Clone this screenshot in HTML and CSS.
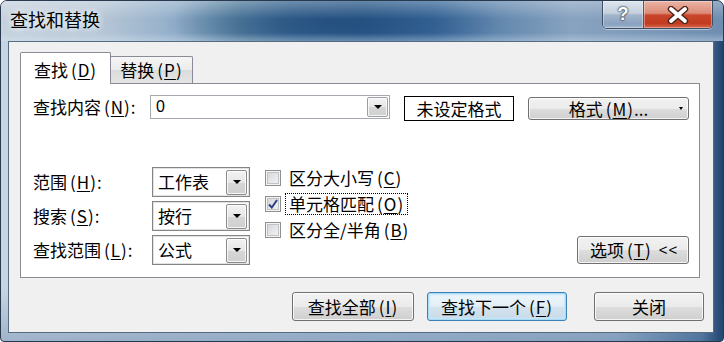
FILE: index.html
```html
<!DOCTYPE html>
<html lang="zh-CN">
<head>
<meta charset="utf-8">
<title>查找和替换</title>
<link rel="stylesheet" href="styles.css">
</head>
<body>
<div class="window">
  <div class="titlebar">
    <span class="title">查找和替换</span>
    <div class="caption">
      <div class="cap-btn help">?</div>
      <div class="cap-btn close">
        <svg width="24" height="18" viewBox="0 0 24 18"><path d="M5 3 L19 15 M19 3 L5 15" stroke="#4a2418" stroke-width="6.5" stroke-linecap="round"/><path d="M5 3 L19 15 M19 3 L5 15" stroke="#fff" stroke-width="3.8" stroke-linecap="round"/></svg>
      </div>
    </div>
  </div>
  <div class="client">
    <div class="tabs">
      <div class="tab active">查找<span class="mn">(<u>D</u>)</span></div>
      <div class="tab">替换<span class="mn">(<u>P</u>)</span></div>
    </div>
    <div class="panel">
      <div class="find-row">
        <span class="label">查找内容<span class="mn">(<u>N</u>)</span>:</span>
        <div class="combo"><span class="value">0</span><span class="drop"></span></div>
        <div class="fmt-box">未设定格式</div>
        <div class="btn fmt-btn"><span></span><span>格式<span class="mn">(<u>M</u>)</span>...</span><span class="mini-arrow"></span></div>
      </div>
      <div class="options">
        <div class="selects">
          <span class="label">范围<span class="mn">(<u>H</u>)</span>:</span>
          <div class="select"><span>工作表</span><span class="drop"></span></div>
          <span class="label">搜索<span class="mn">(<u>S</u>)</span>:</span>
          <div class="select"><span>按行</span><span class="drop"></span></div>
          <span class="label">查找范围<span class="mn">(<u>L</u>)</span>:</span>
          <div class="select"><span>公式</span><span class="drop"></span></div>
        </div>
        <div class="checks">
          <div class="check"><span class="box"></span><span class="ctext">区分大小写<span class="mn">(<u>C</u>)</span></span></div>
          <div class="check"><span class="box"><svg width="12" height="12" viewBox="0 0 12 12"><path d="M2 6.5 L4.8 9.5 L10 2" fill="none" stroke="#2c3f85" stroke-width="2"/></svg></span><span class="ctext focus">单元格匹配<span class="mn">(<u>O</u>)</span></span></div>
          <div class="check"><span class="box"></span><span class="ctext">区分全/半角<span class="mn">(<u>B</u>)</span></span></div>
        </div>
        <div class="btn opt-btn">选项<span class="mn">(<u>T</u>)</span><span class="chev">&lt;&lt;</span></div>
      </div>
    </div>
    <div class="actions">
      <div class="btn act find-all">查找全部<span class="mn">(<u>I</u>)</span></div>
      <div class="btn act find-next default">查找下一个<span class="mn">(<u>F</u>)</span></div>
      <div class="btn act close-btn">关闭</div>
    </div>
  </div>
</div>
</body>
</html>
```

FILE: styles.css
```css
html, body {
  margin: 0;
  padding: 0;
}
body {
  width: 724px;
  height: 342px;
  overflow: hidden;
  background: #ffffff;
  font-family: "Noto Sans CJK SC", "Liberation Sans", sans-serif;
  font-size: 17px;
  color: #000;
}
u {
  text-decoration: underline;
  text-underline-offset: 2px;
  text-decoration-thickness: 1px;
}
.mn {
  margin-left: 3px;
  letter-spacing: 1px;
}
.window {
  box-sizing: border-box;
  width: 724px;
  height: 342px;
  border: 1px solid #2a3a4e;
  border-radius: 7px 7px 4px 4px;
  overflow: hidden;
  display: flex;
  flex-direction: column;
  background:
    linear-gradient(to bottom, rgba(255,255,255,0) 85%, rgba(40,80,130,.25) 100%),
    linear-gradient(to right, #c7d5e3 0%, #b8cadc 35%, #aec3d8 60%, #a3bad1 85%, #5e81a7 97%, #20426c 100%);
}
.titlebar {
  height: 40px;
  flex: none;
  display: flex;
  align-items: flex-start;
  padding: 0 10px 0 9px;
  background:
    linear-gradient(to bottom, rgba(255,255,255,.28) 0%, rgba(255,255,255,0) 45%, rgba(255,255,255,0) 80%, rgba(220,235,248,.35) 100%),
    radial-gradient(ellipse 170px 34px at 330px 22px, rgba(25,65,115,.55), rgba(25,65,115,0)),
    linear-gradient(to right, #c6d2de 0%, #b9c8d7 13%, #93afca 24%, #55809f 33%, #3a6894 40%, #2d5d8c 50%, #39689a 60%, #6388ae 69%, #88a3c0 79%, #7d99b9 90%, #6e8db1 100%);
}
.title {
  line-height: 36px;
  font-size: 18px;
  text-shadow: 0 0 6px rgba(255,255,255,.9), 0 0 10px rgba(255,255,255,.6);
}
.caption {
  margin-left: auto;
  display: flex;
  height: 27px;
  border: 1px solid #3d4f66;
  border-top: none;
  border-radius: 0 0 5px 5px;
  overflow: hidden;
  box-shadow: 0 1px 0 rgba(255,255,255,.45);
}
.cap-btn {
  height: 27px;
  display: flex;
  align-items: center;
  justify-content: center;
  box-shadow: inset 0 0 0 1px rgba(255,255,255,.35);
}
.help {
  width: 40px;
  border-right: 1px solid #4a5a70;
  color: #fff;
  font-family: "Liberation Sans", sans-serif;
  font-weight: bold;
  font-size: 18px;
  text-shadow: 0 0 2px #1e2a3c, 0 0 2px #1e2a3c;
  background: linear-gradient(to bottom, #dde5ed 0%, #c4d0dd 45%, #a3b5ca 52%, #8aa2bf 85%, #9fb5cf 100%);
}
.close {
  width: 68px;
  background: linear-gradient(to bottom, #eab4a6 0%, #dd8b77 45%, #c9472c 52%, #c13a1f 82%, #d8674b 100%);
}
.client {
  flex: 1;
  margin: 0 9px 8px 7px;
  border: 1px solid #566a80;
  background: #f0f0f0;
  display: flex;
  flex-direction: column;
  padding: 10px 9px 0 11px;
}
.tabs {
  display: flex;
  align-items: flex-end;
  height: 31px;
}
.tab {
  box-sizing: border-box;
  height: 27px;
  width: 83px;
  margin-left: -1px;
  border: 1px solid #898c95;
  border-bottom: none;
  border-radius: 2px 2px 0 0;
  background: linear-gradient(to bottom, #f6f6f6 0%, #ebebeb 50%, #dcdcdc 51%, #e4e4e4 100%);
  display: flex;
  align-items: center;
  justify-content: center;
  line-height: 20px;
}
.tab.active {
  position: relative;
  z-index: 1;
  margin-left: 0;
  width: 91px;
  height: 32px;
  margin-bottom: -1px;
  background: #ffffff;
  padding-top: 2px;
}
.panel {
  box-sizing: border-box;
  height: 195px;
  margin-right: 4px;
  background: #ffffff;
  border: 1px solid #898c95;
}
.label {
  line-height: 22px;
  white-space: nowrap;
}
.find-row {
  display: flex;
  align-items: flex-start;
  margin-top: 11px;
  padding-left: 12px;
}
.find-row .label {
  width: 117px;
  flex: none;
  margin-top: 1px;
}
.combo {
  box-sizing: border-box;
  width: 240px;
  height: 24px;
  border: 1px solid #a5a9b0;
  display: flex;
  align-items: center;
  background: #fff;
}
.combo .value {
  padding-left: 5px;
  line-height: 20px;
  font-family: "Liberation Sans", sans-serif;
  font-size: 16px;
}
.drop {
  box-sizing: border-box;
  margin-left: auto;
  display: flex;
  align-items: center;
  justify-content: center;
  border: 1px solid #9aa0a6;
  border-radius: 2px;
  background: linear-gradient(to bottom, #f3f3f3 0%, #e6e6e6 50%, #d6d6d6 51%, #d0d0d0 100%);
  box-shadow: inset 0 0 0 1px rgba(255,255,255,.8);
}
.drop::after {
  content: "";
  width: 0;
  height: 0;
  border-left: 4px solid transparent;
  border-right: 4px solid transparent;
  border-top: 4px solid #000;
}
.combo .drop {
  width: 21px;
  height: 20px;
  margin-right: 1px;
}
.fmt-box {
  box-sizing: border-box;
  margin-left: 14px;
  margin-top: 1px;
  width: 110px;
  height: 25px;
  border: 1px solid #000;
  background: #fff;
  display: flex;
  align-items: center;
  justify-content: center;
  line-height: 20px;
}
.btn {
  box-sizing: border-box;
  border: 1px solid #707070;
  border-radius: 3px;
  background: linear-gradient(to bottom, #f2f2f2 0%, #ebebeb 50%, #dddddd 51%, #cfcfcf 100%);
  box-shadow: inset 0 0 0 1px rgba(255,255,255,.75);
  display: flex;
  align-items: center;
  justify-content: center;
  line-height: 20px;
  white-space: nowrap;
}
.fmt-btn {
  margin-left: 14px;
  margin-top: 2px;
  width: 161px;
  height: 23px;
  display: grid;
  grid-template-columns: 1fr auto 1fr;
  align-items: center;
}
.mini-arrow {
  justify-self: end;
  margin-right: 5px;
  width: 0;
  height: 0;
  border-left: 2.5px solid transparent;
  border-right: 2.5px solid transparent;
  border-top: 3px solid #000;
}
.options {
  display: flex;
  margin-top: 46px;
  padding-left: 12px;
  padding-right: 10px;
}
.selects {
  display: grid;
  grid-template-columns: 119px 98px;
  grid-auto-rows: 30px;
  row-gap: 4px;
  align-items: center;
}
.select {
  box-sizing: border-box;
  height: 30px;
  border: 1px solid #858585;
  box-shadow: inset 0 0 0 1px #e2e2e2;
  background: #fff;
  display: flex;
  align-items: center;
  padding-left: 5px;
  line-height: 22px;
}
.select .drop {
  width: 21px;
  height: 25px;
  margin-right: 2px;
  border-color: #8a8a8a;
}
.checks {
  margin-left: 15px;
  margin-top: -2px;
  display: flex;
  flex-direction: column;
}
.check {
  display: flex;
  align-items: center;
  height: 26px;
}
.box {
  box-sizing: border-box;
  width: 16px;
  height: 16px;
  border: 1px solid #8e8f8f;
  background: linear-gradient(135deg, #cfd2d6 0%, #e4e5e7 50%, #f7f7f7 100%);
  box-shadow: inset 0 0 0 1px #f4f4f4, inset 0 0 0 2px #bfc3c8;
  display: grid;
  place-items: center;
}
.ctext {
  margin-left: 4px;
  border: 1px dotted transparent;
  padding: 0 3px;
  line-height: 20px;
}
.ctext.focus {
  border-color: #000;
}
.opt-btn {
  margin-left: auto;
  align-self: flex-end;
  margin-bottom: 1px;
  width: 112px;
  height: 28px;
  justify-content: flex-start;
  padding-left: 12px;
}
.chev {
  margin-left: 7px;
  letter-spacing: 1px;
  font-family: "Liberation Sans", sans-serif;
  font-size: 15px;
}
.actions {
  display: flex;
  justify-content: flex-end;
  margin-top: 14px;
}
.act {
  height: 29px;
}
.find-all {
  width: 122px;
}
.find-next {
  width: 140px;
  margin-left: 13px;
}
.close-btn {
  width: 110px;
  margin-left: 27px;
}
.default {
  border-color: #3c7fb1;
  background: linear-gradient(to bottom, #eef6fb 0%, #e2eef6 50%, #d3e3ee 51%, #c9dbe8 100%);
  box-shadow: inset 0 0 0 1px #a8dcf6, inset 0 0 2px 2px #c4e8fa;
}
```
